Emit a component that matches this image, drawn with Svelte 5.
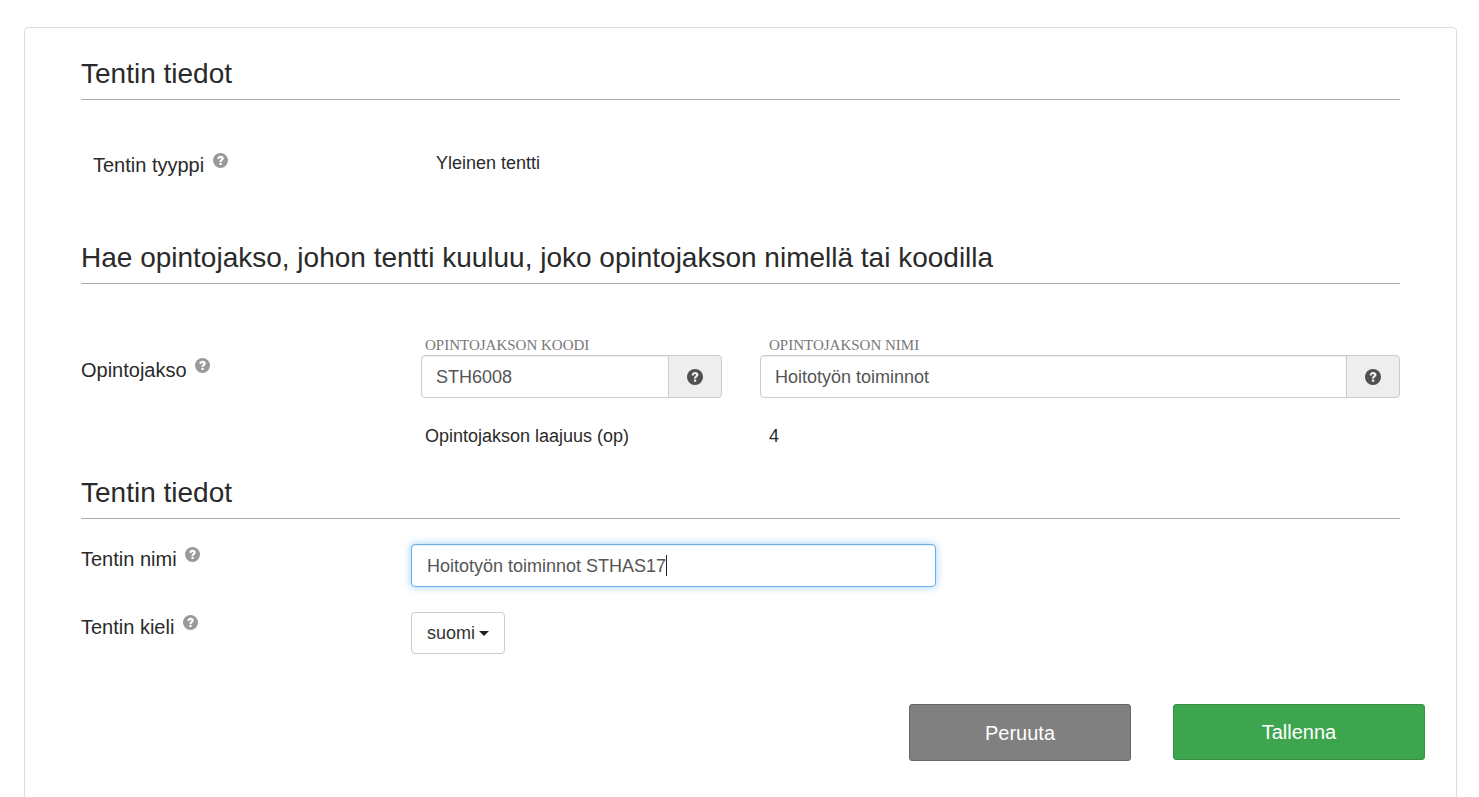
<script>
  let code = $state('STH6008');
  let course = $state('Hoitotyön toiminnot');
  let name = $state('Hoitotyön toiminnot STHAS17');
  let language = $state('suomi');
</script>

{#snippet help()}
  <svg class="help" viewBox="0 0 16 16" aria-hidden="true">
    <circle cx="8" cy="8" r="8" fill="currentColor" />
    <path d="M4.7 6.5C4.7 4.2 6 3 8.1 3c2 0 3.4 1.1 3.4 2.8 0 2-2.3 2.2-2.3 3.7H6.9c0-2.4 2-2.3 2-3.6 0-.6-.3-.9-.9-.9-.7 0-1.1.5-1.1 1.5z" fill="var(--mark)" />
    <path d="M6.9 10.5h2.3v2.3H6.9z" fill="var(--mark)" />
  </svg>
{/snippet}

<main class="panel">
  <h2>Tentin tiedot</h2>
  <div class="row type">
    <span class="label">Tentin tyyppi {@render help()}</span>
    <span class="value">Yleinen tentti</span>
  </div>

  <h2>Hae opintojakso, johon tentti kuuluu, joko opintojakson nimellä tai koodilla</h2>
  <div class="row course">
    <span class="label">Opintojakso {@render help()}</span>
    <div class="search">
      <div>
        <label class="caption" for="code">OPINTOJAKSON KOODI</label>
        <div class="group">
          <input id="code" bind:value={code} />
          <button class="addon" type="button" aria-label="Ohje">{@render help()}</button>
        </div>
        <div class="extent">Opintojakson laajuus (op)</div>
      </div>
      <div class="wide">
        <label class="caption" for="course">OPINTOJAKSON NIMI</label>
        <div class="group">
          <input id="course" bind:value={course} />
          <button class="addon" type="button" aria-label="Ohje">{@render help()}</button>
        </div>
        <div class="extent">4</div>
      </div>
    </div>
  </div>

  <h2>Tentin tiedot</h2>
  <div class="row field">
    <label class="label" for="name">Tentin nimi {@render help()}</label>
    <div class="focused">
      <input id="name" bind:value={name} />
      <span class="caret" aria-hidden="true"><span class="ghost">{name}</span></span>
    </div>
  </div>
  <div class="row field">
    <label class="label" for="language">Tentin kieli {@render help()}</label>
    <div>
      <span class="dropdown">
        <select id="language" bind:value={language}>
          <option>suomi</option>
        </select>
        <span class="arrow"></span>
      </span>
    </div>
  </div>

  <div class="actions">
    <button class="cancel" type="button">Peruuta</button>
    <button class="save" type="button">Tallenna</button>
  </div>
</main>

<style>
  :global(body) { margin: 0; background: #fff; }
  .panel, .panel * { box-sizing: border-box; }
  .panel {
    --mark: #fff;
    margin: 27px 22px 0 24px;
    padding: 27px 56px 56px;
    border: 1px solid #ddd;
    border-radius: 4px 4px 0 0;
    font: 18px/24px "Liberation Sans", Arial, sans-serif;
    color: #2a2a2a;
  }
  h2 {
    margin: 0;
    padding-bottom: 6px;
    border-bottom: 1px solid #aaa;
    font-size: 28px;
    font-weight: 400;
    line-height: 38px;
  }
  .row { display: grid; grid-template-columns: 330px minmax(0, 1fr); }
  .label { font-size: 20px; line-height: 28px; }
  .help { width: 16px; height: 16px; color: #999; }
  .label .help { position: relative; top: -4px; width: 15px; height: 15px; margin-left: 3px; }
  .type { padding: 51px 12px 60px; }
  .type .value { padding-left: 13px; }
  .course { padding: 52px 0 26px; }
  .course > .label { padding-top: 20px; }
  .search {
    display: grid;
    grid-template-columns: 301px minmax(0, 1fr);
    gap: 38px;
    padding-left: 10px;
  }
  .caption {
    display: block;
    padding-left: 4px;
    font: 15px/19px "Liberation Serif", "Times New Roman", serif;
    color: #777;
  }
  .group { display: flex; height: 43px; }
  input {
    width: 100%;
    min-width: 0;
    height: 43px;
    padding: 1px 15px 0;
    border: 1px solid #ccc;
    border-radius: 4px;
    outline: 0;
    background: #fff;
    box-shadow: inset 0 1px 1px rgb(0 0 0 / 8%);
    font: inherit;
    color: #555;
  }
  .group input { padding: 1px 14px 0; border-radius: 4px 0 0 4px; }
  .addon {
    --mark: #eee;
    display: grid;
    flex: 0 0 54px;
    place-items: center;
    padding: 0;
    border: 1px solid #ccc;
    border-radius: 0 4px 4px 0;
    margin-left: -1px;
    background: #eee;
  }
  .addon .help { color: #505050; }
  .extent { padding: 26px 4px 0; }
  .wide .caption, .wide .extent { padding-left: 9px; }
  .field { padding-top: 25px; }
  .field .label { padding-top: 1px; }
  .focused { position: relative; width: 525px; max-width: 100%; }
  .focused input {
    display: block;
    border-color: #66afe9;
    box-shadow: inset 0 1px 1px rgb(0 0 0 / 8%), 0 0 8px rgb(102 175 233 / 60%);
  }
  .caret { position: absolute; inset: 11px auto 11px 16px; border-right: 1px solid #222; pointer-events: none; }
  .ghost { visibility: hidden; white-space: pre; }
  .dropdown { display: inline-grid; align-items: center; vertical-align: top; }
  .dropdown > * { grid-area: 1 / 1; }
  select {
    appearance: none;
    height: 42px;
    padding: 0 28px 0 15px;
    border: 1px solid #ccc;
    border-radius: 4px;
    background: #fff;
    font: inherit;
    color: #333;
  }
  .arrow {
    justify-self: end;
    margin-right: 16px;
    border: 5px solid transparent;
    border-top-color: #222;
    border-bottom: 0;
    pointer-events: none;
  }
  .actions { display: flex; align-items: flex-start; justify-content: flex-end; gap: 42px; margin: 50px -25px 0 0; }
  .actions button { height: 57px; border: 1px solid #666; border-radius: 3px; font: inherit; font-size: 20px; color: #fff; }
  .actions .cancel { width: 222px; background: #808080; }
  .actions .save { width: 252px; height: 56px; border-color: #398f48; background: #3ea54f; }
</style>
